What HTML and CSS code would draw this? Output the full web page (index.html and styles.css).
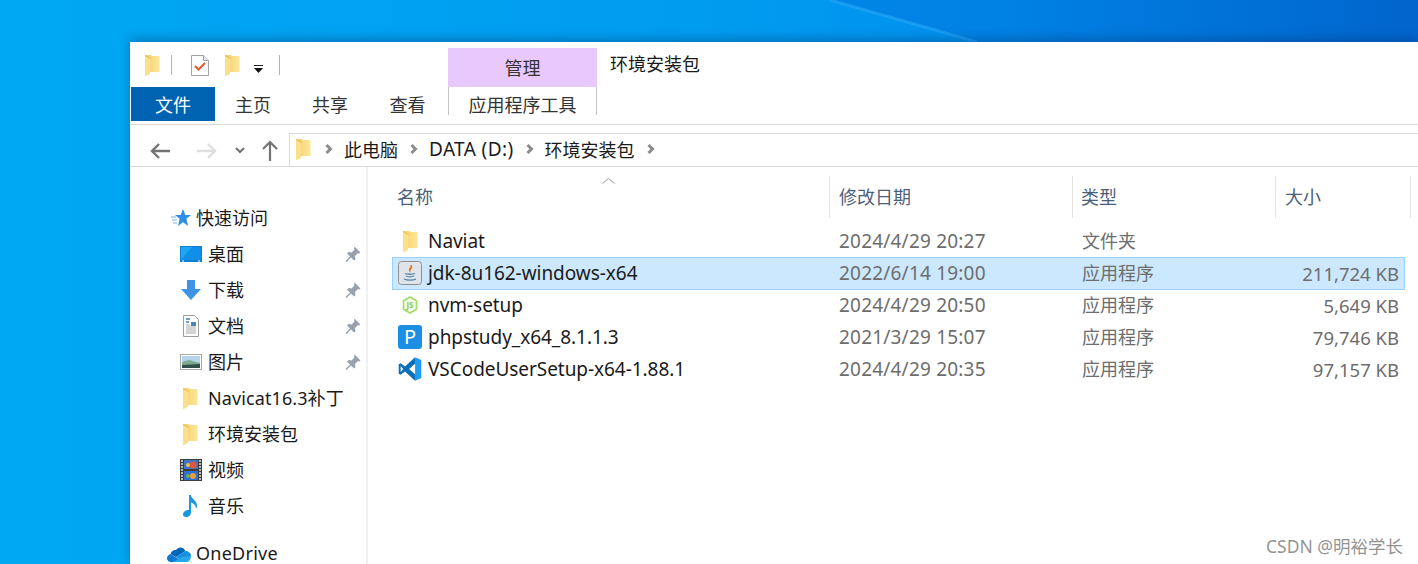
FILE: index.html
```html
<!DOCTYPE html>
<html lang="zh-CN">
<head>
    <meta charset="UTF-8">
    <meta name="viewport" content="width=device-width, initial-scale=1.0">
    <title>环境安装包</title>
    <link rel="stylesheet" href="styles.css">
</head>
<body>

<svg class="defs" width="0" height="0">
    <defs>
        <linearGradient id="folderBack" x1="0" y1="0" x2="1" y2="0">
            <stop offset="0" stop-color="#f6d06c"/>
            <stop offset="1" stop-color="#fde69a"/>
        </linearGradient>
        <symbol id="folder" viewBox="0 0 15 21">
            <path d="M0 0h6l1 1h7.500v16H0z" fill="url(#folderBack)"/>
            <path d="M0 1l5 3v15l-4 2H0z" fill="#fbe08c"/>
            <path d="M0 0l6 3v1L0 1z" fill="#e9bb4e"/>
        </symbol>
        <symbol id="pin" viewBox="0 0 16 16">
            <path d="M9.500 0.500l6 6-1.500 1-1-.5-3 3 .5 3-1.500 1.500-3-3-4.500 4.500-1-1 4.500-4.500-3-3 1.500-1.500 3 .5 3-3-.5-1z" fill="#98a1ab"/>
        </symbol>
        <symbol id="chev" viewBox="0 0 8 12">
            <path d="M1.500 2l4 4-4 4" fill="none" stroke="#8c8c8c" stroke-width="3"/>
        </symbol>
    </defs>
</svg>

<div class="desktop">
    <svg class="streak" width="1418" height="42" viewBox="0 0 1418 42">
        <path d="M830 0L977 42H1418V0z" fill="#0072da" opacity=".45"/>
        <path d="M830 0L977 42" stroke="#28a8f8" stroke-width="3" fill="none" opacity=".6"/>
    </svg>

    <div class="window">
        <!-- 顶部功能区 -->
        <div class="ribbon-top">
            <div class="qat">
                <svg class="qat-folder" width="15" height="21"><use href="#folder"/></svg>
                <span class="qat-sep"></span>
                <svg class="qat-doc" width="18" height="21" viewBox="0 0 18 21">
                    <path d="M.5.5h12l5 5v15H.500z" fill="#fff" stroke="#a0a0a0"/>
                    <path d="M12.500.5v5h5" fill="#e8e8e8" stroke="#a0a0a0"/>
                    <path d="M4 11l3.500 3.500L14 8" fill="none" stroke="#e8562a" stroke-width="2"/>
                </svg>
                <svg class="qat-folder2" width="15" height="21"><use href="#folder"/></svg>
                <svg class="qat-drop" width="9" height="8" viewBox="0 0 9 8">
                    <path d="M0 0h9v1H0z" fill="#222"/>
                    <path d="M0 3h9L4.500 8z" fill="#111"/>
                </svg>
                <span class="qat-sep qat-sep-last"></span>
            </div>
            <div class="context-tab">管理</div>
            <div class="window-title">环境安装包</div>
        </div>

        <div class="ribbon-tabs">
            <div class="tab tab-file">文件</div>
            <div class="tab tab-home">主页</div>
            <div class="tab tab-share">共享</div>
            <div class="tab tab-view">查看</div>
            <div class="tab tab-tools">应用程序工具</div>
        </div>

        <!-- 地址栏 -->
        <div class="navbar">
            <svg class="nav-back" width="21" height="16" viewBox="0 0 21 16">
                <path d="M20 8H2M9 1L2 8l7 7" fill="none" stroke="#737373" stroke-width="2.400"/>
            </svg>
            <svg class="nav-forward" width="20" height="16" viewBox="0 0 20 16">
                <path d="M0 8h18M11 1l7 7-7 7" fill="none" stroke="#dedede" stroke-width="2.400"/>
            </svg>
            <svg class="nav-down" width="10" height="7" viewBox="0 0 10 7">
                <path d="M1 1l4 4 4-4" fill="none" stroke="#707070" stroke-width="2"/>
            </svg>
            <svg class="nav-up" width="16" height="21" viewBox="0 0 16 21">
                <path d="M8 21V2M1 9l7-7 7 7" fill="none" stroke="#737373" stroke-width="2.200"/>
            </svg>
            <div class="address">
                <svg class="addr-folder" width="15" height="21"><use href="#folder"/></svg>
                <svg class="addr-chev" width="8" height="12"><use href="#chev"/></svg>
                <span class="crumb">此电脑</span>
                <svg class="addr-chev" width="8" height="12"><use href="#chev"/></svg>
                <span class="crumb crumb-latin">DATA (D:)</span>
                <svg class="addr-chev" width="8" height="12"><use href="#chev"/></svg>
                <span class="crumb">环境安装包</span>
                <svg class="addr-chev" width="8" height="12"><use href="#chev"/></svg>
            </div>
        </div>

        <div class="main">
            <!-- 左侧导航 -->
            <div class="sidebar">
                <div class="side-row side-top">
                    <svg class="side-icon-top" width="20" height="18" viewBox="0 0 20 18">
                        <path d="M12 0l2.300 6H20l-4.600 3.800L17 17l-5-3.800L7 17l1.600-7.200L4 6h5.700z" fill="#2e8fe8"/>
                        <path d="M0 8h5M1 11h5M2 14h4" stroke="#6db8f2" stroke-width="1"/>
                    </svg>
                    <span>快速访问</span>
                </div>
                <div class="side-row">
                    <svg class="side-icon" width="22" height="16" viewBox="0 0 22 16">
                        <rect width="22" height="16" fill="#0f7fd0"/>
                        <rect x="1" y="1" width="20" height="13" fill="#20a4f5"/>
                        <path d="M1 14L12 1h9v13z" fill="#0f8fe8"/>
                        <path d="M2 15h2M18 15h2" stroke="#fff" stroke-width="1"/>
                    </svg>
                    <span>桌面</span>
                    <svg class="pin" width="16" height="16"><use href="#pin"/></svg>
                </div>
                <div class="side-row">
                    <svg class="side-icon" width="22" height="20" viewBox="0 0 22 20">
                        <path d="M7 0h8v9h6l-10 11L1 9h6z" fill="#3d94e4"/>
                    </svg>
                    <span>下载</span>
                    <svg class="pin" width="16" height="16"><use href="#pin"/></svg>
                </div>
                <div class="side-row">
                    <svg class="side-icon" width="22" height="22" viewBox="0 0 22 22">
                        <path d="M3.500.5h11l4 4v17h-15z" fill="#fff" stroke="#9c9c9c"/>
                        <path d="M6 4h4M6 7h3" stroke="#3a7fc0" stroke-width="1.500"/>
                        <rect x="11" y="7" width="5" height="4" fill="#4a86b8"/>
                        <path d="M6 10h4M6 12h10M6 14h10M6 16h10M6 18h10" stroke="#a8a8a8" stroke-width="1"/>
                    </svg>
                    <span>文档</span>
                    <svg class="pin" width="16" height="16"><use href="#pin"/></svg>
                </div>
                <div class="side-row">
                    <svg class="side-icon" width="22" height="16" viewBox="0 0 22 16">
                        <rect x=".5" y=".5" width="21" height="15" fill="#fff" stroke="#a8a8a8"/>
                        <rect x="2" y="2" width="18" height="12" fill="#b4d4ec"/>
                        <path d="M2 8l7-2 11 3v5H2z" fill="#7fa890"/>
                        <path d="M2 11l18-1v4H2z" fill="#2f4f48"/>
                    </svg>
                    <span>图片</span>
                    <svg class="pin" width="16" height="16"><use href="#pin"/></svg>
                </div>
                <div class="side-row">
                    <svg class="side-icon side-folder" width="15" height="21"><use href="#folder"/></svg>
                    <span class="side-latin">Navicat16.3补丁</span>
                </div>
                <div class="side-row">
                    <svg class="side-icon side-folder" width="15" height="21"><use href="#folder"/></svg>
                    <span>环境安装包</span>
                </div>
                <div class="side-row">
                    <svg class="side-icon" width="22" height="22" viewBox="0 0 22 22">
                        <rect width="22" height="22" fill="#3c3c3c"/>
                        <rect x="4" y="1" width="14" height="9" fill="#3d78c8"/>
                        <rect x="4" y="12" width="14" height="9" fill="#2f6fd0"/>
                        <circle cx="13" cy="6" r="3.500" fill="#e0563c"/>
                        <circle cx="8" cy="6" r="2" fill="#e8c04c"/>
                        <circle cx="13" cy="17" r="3" fill="#e8a03c"/>
                        <circle cx="8" cy="17" r="2" fill="#6fb04c"/>
                        <path d="M1 2h2M1 5h2M1 8h2M1 11h2M1 14h2M1 17h2M1 20h2M19 2h2M19 5h2M19 8h2M19 11h2M19 14h2M19 17h2M19 20h2" stroke="#e4e4e4" stroke-width="1.500"/>
                    </svg>
                    <span>视频</span>
                </div>
                <div class="side-row">
                    <svg class="side-icon" width="22" height="22" viewBox="0 0 22 22">
                        <path d="M9 0h2c0 4 6 5 6 11 0 1-.5 2-1 3 0-4-3-6-5-6.500V17c0 3-2 5-5 5-2 0-3-1-3-2.500C3 17 6 14.500 9 15z" fill="#1a96e4"/>
                    </svg>
                    <span>音乐</span>
                </div>
                <div class="side-row side-top side-drive">
                    <svg class="side-icon-drive" width="24" height="16" viewBox="0 0 24 16">
                        <path d="M9 4c2-3 7-4 9.500 1L9 11 3.500 8C4 5.500 6.500 3.500 9 4z" fill="#0364b8"/>
                        <path d="M18.500 5C21 5 24 7 24 10L15 15 9 11z" fill="#1490df"/>
                        <path d="M3.500 8L15 15l5 1H4c-3 0-4-2.500-4-4s1.500-3.500 3.500-4z" fill="#0f78d4"/>
                        <path d="M24 10c0 3-2 6-4 6H6l9-5z" fill="#28a8ea"/>
                    </svg>
                    <span>OneDrive</span>
                </div>
            </div>

            <!-- 文件列表 -->
            <div class="files">
                <svg class="sort-caret" width="13" height="6" viewBox="0 0 13 6">
                    <path d="M.5 5.500l6-5 6 5" fill="none" stroke="#9a9a9a"/>
                </svg>
                <div class="file-head">
                    <div class="head-cell head-name">名称</div>
                    <div class="head-cell">修改日期</div>
                    <div class="head-cell head-type">类型</div>
                    <div class="head-cell">大小</div>
                </div>

                <div class="file-row">
                    <div class="cell-name">
                        <span class="file-icon"><svg width="15" height="21"><use href="#folder"/></svg></span>
                        Naviat
                    </div>
                    <div class="cell-date">2024/4/29 20:27</div>
                    <div class="cell-type">文件夹</div>
                    <div class="cell-size"></div>
                </div>
                <div class="file-row selected">
                    <div class="cell-name">
                        <span class="file-icon">
                            <svg width="24" height="24" viewBox="0 0 24 24">
                                <rect x=".5" y=".5" width="23" height="23" rx="3" fill="#dfe3ea" stroke="#8e8e8e"/>
                                <path d="M13 4c1 2-3 3.500-1 6.500C11.500 8 15 7 13 4z" fill="#e76f00" stroke="#e76f00"/>
                                <path d="M7 12.500c2 1 8 1 10 0M8 15c2 1 6 1 8 0M6 18c3 1.500 9 1.500 12 0" fill="none" stroke="#5382a1" stroke-width="1.300"/>
                            </svg>
                        </span>
                        jdk-8u162-windows-x64
                    </div>
                    <div class="cell-date">2022/6/14 19:00</div>
                    <div class="cell-type">应用程序</div>
                    <div class="cell-size">211,724 KB</div>
                </div>
                <div class="file-row">
                    <div class="cell-name">
                        <span class="file-icon">
                            <svg width="16" height="18" viewBox="0 0 16 18">
                                <path d="M8 1l6.500 3.700v8.600L8 17l-6.500-3.700V4.700z" fill="#f4fbe8" stroke="#a6d86a" stroke-width="1.600"/>
                                <text x="8" y="12" class="js-label">JS</text>
                            </svg>
                        </span>
                        nvm-setup
                    </div>
                    <div class="cell-date">2024/4/29 20:50</div>
                    <div class="cell-type">应用程序</div>
                    <div class="cell-size">5,649 KB</div>
                </div>
                <div class="file-row">
                    <div class="cell-name">
                        <span class="file-icon">
                            <svg class="php-icon" width="24" height="24" viewBox="0 0 24 24">
                                <rect width="24" height="24" rx="3" fill="#1a8fe3"/>
                                <text x="12" y="19" class="php-label">P</text>
                            </svg>
                        </span>
                        phpstudy_x64_8.1.1.3
                    </div>
                    <div class="cell-date">2021/3/29 15:07</div>
                    <div class="cell-type">应用程序</div>
                    <div class="cell-size">79,746 KB</div>
                </div>
                <div class="file-row">
                    <div class="cell-name">
                        <span class="file-icon">
                            <svg width="24" height="24" viewBox="0 0 100 100">
                                <path d="M71 1L29 40 11 26 3 30v40l8 4 18-14 42 39z" fill="#0a6fb8"/>
                                <path d="M71 1l26 12v74l-26 12z" fill="#1f9cf0"/>
                                <path d="M71 28L46 50l25 22z" fill="#fff"/>
                                <path d="M11 38v24l11-12z" fill="#fff"/>
                            </svg>
                        </span>
                        VSCodeUserSetup-x64-1.88.1
                    </div>
                    <div class="cell-date">2024/4/29 20:35</div>
                    <div class="cell-type">应用程序</div>
                    <div class="cell-size">97,157 KB</div>
                </div>
            </div>
        </div>
    </div>

    <div class="watermark">CSDN @明裕学长</div>
</div>

</body>
</html>
```

FILE: styles.css
```css
/* 桌面背景 */
body {
    margin: 0;
    overflow: hidden;
    font-family: "Noto Sans", "Noto Sans CJK SC", sans-serif;
    font-size: 18px;
    color: #1a1a1a;
}

.defs {
    position: absolute;
}

.desktop {
    position: relative;
    width: 1418px;
    height: 564px;
    box-sizing: border-box;
    padding: 42px 0 0 130px;
    overflow: hidden;
    background: linear-gradient(90deg, #00a8f2 0%, #009cf0 50%, #0090ee 70%, #005cc4 100%);
}

.streak {
    position: absolute;
    left: 0;
    top: 0;
}

/* 资源管理器窗口 */
.window {
    position: relative;
    width: 1288px;
    height: 522px;
    background: #ffffff;
    box-shadow: 0 -3px 10px rgba(0, 40, 90, 0.35);
}

.ribbon-top {
    display: flex;
    height: 45px;
}

.qat {
    display: flex;
    align-items: flex-start;
    width: 318px;
    padding-top: 13px;
    box-sizing: border-box;
}

.qat-folder {
    margin-left: 15px;
}

.qat-sep {
    width: 1px;
    height: 20px;
    margin-left: 11px;
    background: #b4b4b4;
}

.qat-doc {
    margin-left: 19px;
}

.qat-folder2 {
    margin-left: 16px;
}

.qat-drop {
    margin-left: 14px;
    margin-top: 10px;
}

.qat-sep-last {
    margin-left: 16px;
}

.context-tab {
    width: 149px;
    height: 39px;
    margin-top: 6px;
    background: #e9c9fd;
    color: #333333;
    text-align: center;
    line-height: 40px;
}

.window-title {
    margin-left: 13px;
    line-height: 44px;
}

/* 选项卡 */
.ribbon-tabs {
    display: flex;
    align-items: flex-start;
    height: 37px;
    border-bottom: 1px solid #d9d9d9;
}

.tab {
    height: 34px;
    line-height: 36px;
    text-align: center;
    color: #333333;
}

.tab-file {
    width: 84px;
    margin-left: 1px;
    background: #0063b1;
    color: #ffffff;
}

.tab-home {
    width: 76px;
}

.tab-share {
    width: 78px;
}

.tab-view {
    width: 77px;
}

.tab-tools {
    width: 147px;
    height: 28px;
    margin-left: 2px;
    border-left: 1px solid #c4c4c4;
    border-right: 1px solid #c4c4c4;
}

/* 地址栏 */
.navbar {
    display: flex;
    align-items: center;
    height: 41px;
}

.nav-back {
    margin-left: 20px;
    margin-top: 10px;
}

.nav-forward {
    margin-left: 26px;
    margin-top: 10px;
}

.nav-down {
    margin-left: 18px;
    margin-top: 9px;
}

.nav-up {
    margin-left: 17px;
    margin-top: 10px;
}

.address {
    display: flex;
    align-items: center;
    align-self: flex-end;
    height: 33px;
    flex: 1;
    margin-left: 11px;
    padding-bottom: 2px;
    box-sizing: border-box;
    border: 1px solid #d9d9d9;
    border-right: none;
    border-bottom: none;
    color: #1a1a1a;
}

.addr-folder {
    margin-left: 6px;
    margin-right: 14px;
}

.addr-chev {
    margin-right: 11px;
}

.crumb {
    margin-right: 12px;
}

.crumb-latin {
    font-size: 19px;
    letter-spacing: 0.4px;
}

/* 主体 */
.main {
    display: flex;
    height: 397px;
    border-top: 1px solid #d9d9d9;
}

.sidebar {
    width: 236px;
    flex-shrink: 0;
    padding-top: 33px;
    border-right: 2px solid #f0f0f0;
}

.side-row {
    position: relative;
    display: flex;
    align-items: center;
    height: 36px;
    padding-left: 50px;
}

.side-row span {
    margin-left: 6px;
    padding-bottom: 2px;
}

.side-row .side-latin {
    letter-spacing: 0.1px;
}

.side-icon {
    width: 22px;
    flex-shrink: 0;
}

.side-folder {
    width: 15px;
    margin-left: 3px;
    margin-right: 4px;
}

.side-top {
    padding-left: 41px;
}

.side-top span {
    margin-left: 5px;
}

.side-drive {
    margin-top: 12px;
    padding-left: 37px;
}

.side-drive span {
    margin-left: 5px;
    letter-spacing: 0.25px;
}

.pin {
    position: absolute;
    left: 215px;
    top: 10px;
}

.files {
    position: relative;
    flex: 1;
    padding-left: 24px;
}

.sort-caret {
    position: absolute;
    left: 234px;
    top: 11px;
}

.file-head {
    display: grid;
    grid-template-columns: 438px 243px 203px 135px;
    height: 40px;
    margin-top: 9px;
    margin-bottom: 9px;
    color: #4c607a;
}

.head-cell {
    padding-left: 9px;
    line-height: 42px;
    border-right: 1px solid #e4e4e4;
}

.head-name {
    padding-left: 5px;
}

.head-type {
    padding-left: 8px;
}

.file-row {
    display: grid;
    grid-template-columns: 437px 243px 203px 130px;
    align-items: center;
    width: 1013px;
    height: 32px;
    box-sizing: border-box;
    color: #6d6d6d;
}

.selected {
    height: 33px;
    margin-bottom: -1px;
    padding-bottom: 1px;
    background: #cce8ff;
    box-shadow: inset 0 0 0 1px #99d1ff;
}

.cell-name {
    display: flex;
    align-items: center;
    padding-left: 6px;
    font-size: 19px;
    letter-spacing: -0.05px;
    color: #1a1a1a;
}

.file-icon {
    display: flex;
    justify-content: center;
    width: 24px;
    margin-right: 6px;
}

.cell-date {
    padding-left: 10px;
    font-size: 19px;
    letter-spacing: 0.2px;
}

.cell-type {
    padding-left: 10px;
    padding-bottom: 2px;
}

.cell-size {
    padding-right: 6px;
    font-size: 18.500px;
    text-align: right;
}

.js-label {
    font-size: 8px;
    font-weight: bold;
    fill: #8cc84b;
    text-anchor: middle;
}

.php-icon {
    overflow: visible;
}

.php-label {
    font-size: 20px;
    fill: #ffffff;
    text-anchor: middle;
}

.watermark {
    position: absolute;
    left: 1266px;
    top: 533px;
    font-size: 17.500px;
    color: rgba(110, 110, 110, 0.75);
}
```
